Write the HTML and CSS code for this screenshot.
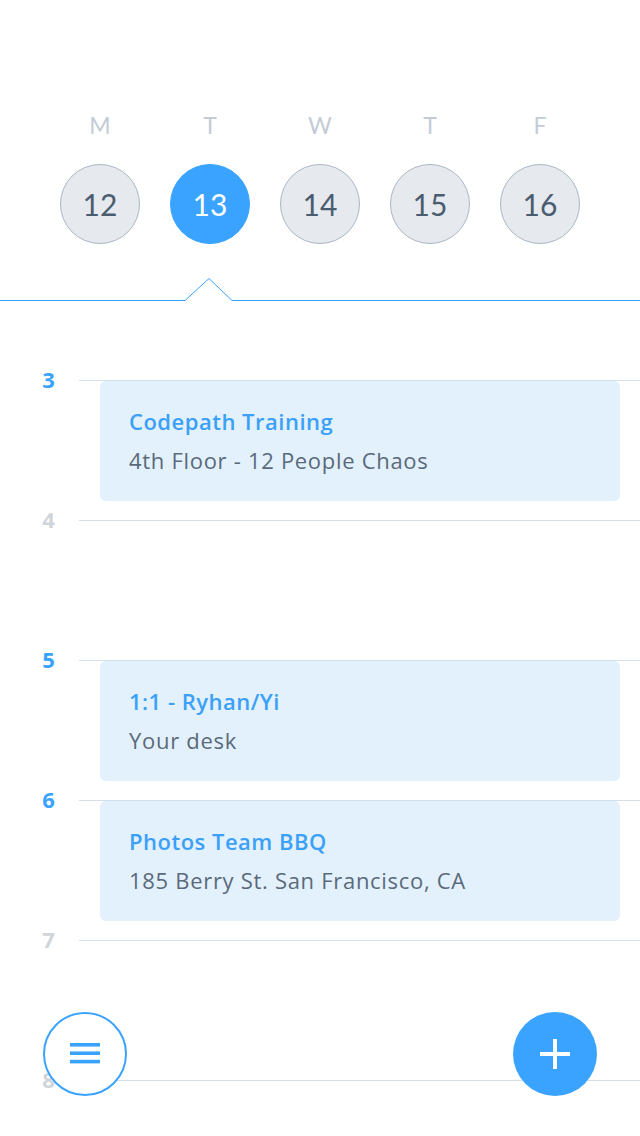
FILE: index.html
```html
<!DOCTYPE html>
<html>
<head>
<meta charset="utf-8">
<link rel="stylesheet" href="styles.css">
</head>
<body>
<div class="page">
  <header class="week">
    <div class="day"><span class="letter">M</span><span class="date">12</span></div>
    <div class="day"><span class="letter">T</span><span class="date selected">13</span></div>
    <div class="day"><span class="letter">W</span><span class="date">14</span></div>
    <div class="day"><span class="letter">T</span><span class="date">15</span></div>
    <div class="day"><span class="letter">F</span><span class="date">16</span></div>
  </header>
  <svg class="divider" width="640" height="25" viewBox="0 277 640 25">
    <path d="M0 300.5 H185 L209 278.5 L232 300.5 H640" fill="none" stroke="#3aa3ff" stroke-width="1"/>
  </svg>
  <main class="timeline">
    <div class="hour">
      <span class="label active">3</span>
      <div class="slot">
        <div class="event">
          <div class="title">Codepath Training</div>
          <div class="sub">4th Floor - 12 People Chaos</div>
        </div>
      </div>
    </div>
    <div class="hour">
      <span class="label">4</span>
      <div class="slot"></div>
    </div>
    <div class="hour">
      <span class="label active">5</span>
      <div class="slot">
        <div class="event">
          <div class="title">1:1 - Ryhan/Yi</div>
          <div class="sub">Your desk</div>
        </div>
      </div>
    </div>
    <div class="hour">
      <span class="label active">6</span>
      <div class="slot">
        <div class="event">
          <div class="title">Photos Team BBQ</div>
          <div class="sub">185 Berry St. San Francisco, CA</div>
        </div>
      </div>
    </div>
    <div class="hour">
      <span class="label">7</span>
      <div class="slot"></div>
    </div>
    <div class="hour">
      <span class="label">8</span>
      <div class="slot"></div>
    </div>
  </main>
  <button class="fab fab-menu" aria-label="Menu">
    <svg width="30" height="22" viewBox="0 0 30 22"><rect x="0" y="0" width="30" height="3.6" fill="#3aa3ff"/><rect x="0" y="8.4" width="30" height="3.6" fill="#3aa3ff"/><rect x="0" y="16.8" width="30" height="3.6" fill="#3aa3ff"/></svg>
  </button>
  <button class="fab fab-add" aria-label="Add">
    <svg width="30" height="30" viewBox="0 0 30 30"><rect x="0" y="13" width="30" height="4" fill="#fff"/><rect x="13" y="0" width="4" height="30" fill="#fff"/></svg>
  </button>
</div>
</body>
</html>
```

FILE: styles.css
```css
html, body {
  margin: 0;
  padding: 0;
  background: #fff;
}
body {
  font-family: "Lato", "Open Sans", sans-serif;
}
.page {
  position: relative;
  width: 640px;
  height: 1136px;
  overflow: hidden;
}
.week {
  display: flex;
  padding: 112px 0 0 45px;
}
.day {
  width: 110px;
  display: flex;
  flex-direction: column;
  align-items: center;
}
.letter {
  font-size: 23px;
  line-height: 26px;
  color: #c3ccd6;
}
.date {
  margin-top: 26px;
  width: 80px;
  height: 80px;
  box-sizing: border-box;
  border-radius: 50%;
  border: 1px solid #a9b7c6;
  background: #e6e9ee;
  color: #4a5d70;
  font-size: 30px;
  display: flex;
  align-items: center;
  justify-content: center;
}
.date.selected {
  background: #3aa3ff;
  border-color: #3aa3ff;
  color: #fff;
}
.divider {
  display: block;
  margin-top: 33px;
}
.timeline {
  margin-top: 78px;
  font-family: "Open Sans", "Lato", sans-serif;
}
.hour {
  display: grid;
  grid-template-columns: 79px 1fr;
  height: 140px;
}
.label {
  margin-top: -13px;
  padding-left: 18px;
  text-align: center;
  font-size: 22px;
  line-height: 24px;
  font-weight: 700;
  color: #d0d5da;
  height: 24px;
}
.label.active {
  color: #3aa3ff;
}
.slot {
  border-top: 1px solid #d3dfea;
}
.event {
  margin: 0 20px 0 21px;
  height: 120px;
  box-sizing: border-box;
  border-radius: 6px;
  background: #e3f1fd;
  padding: 25px 29px;
  display: flex;
  flex-direction: column;
  gap: 9px;
}
.title {
  font-size: 22px;
  line-height: 30px;
  font-weight: 600;
  letter-spacing: 0.5px;
  color: #3aa0f8;
}
.sub {
  font-size: 22px;
  line-height: 30px;
  letter-spacing: 0.7px;
  color: #5a6a7a;
}
.fab {
  position: absolute;
  top: 1012px;
  width: 84px;
  height: 84px;
  padding: 0;
  border-radius: 50%;
  display: flex;
  align-items: center;
  justify-content: center;
  box-sizing: border-box;
}
.fab-menu {
  left: 43px;
  background: #fff;
  border: 2px solid #3aa3ff;
}
.fab-add {
  left: 513px;
  background: #3aa3ff;
  border: none;
}
.fab svg {
  display: block;
}
```
